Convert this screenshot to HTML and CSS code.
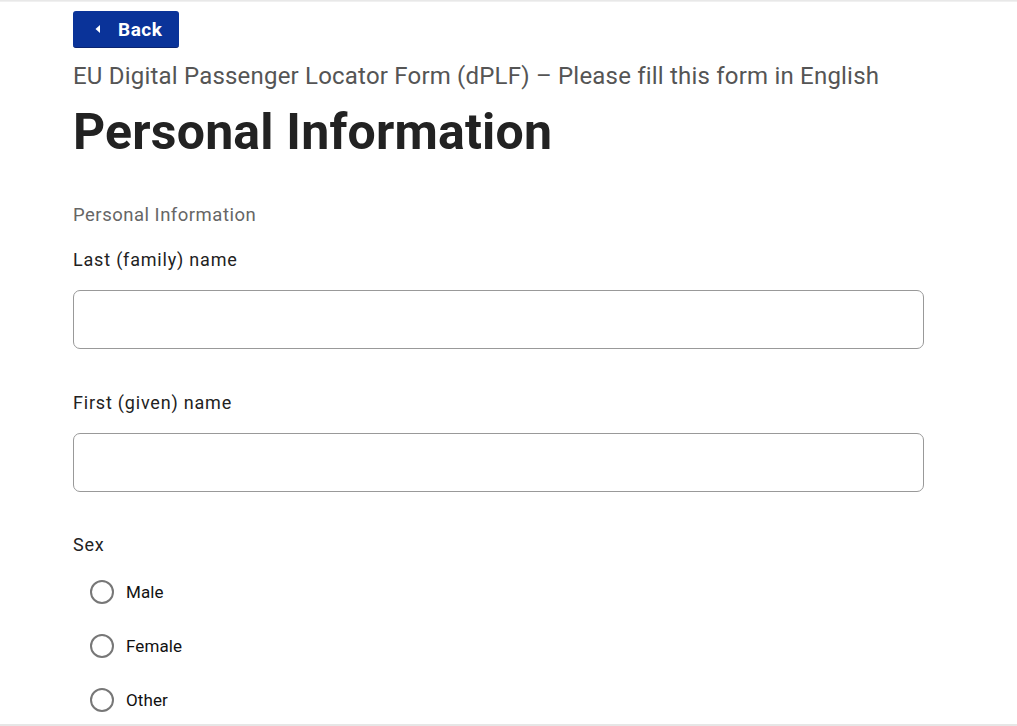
FILE: index.html
```html
<!DOCTYPE html>
<html lang="en">
<head>
<meta charset="utf-8">
<title>Personal Information</title>
<link rel="stylesheet" href="styles.css">
</head>
<body>
<div class="topline"></div>
<main class="page">
  <button class="back" type="button">
    <svg class="back-icon" width="8" height="10" viewBox="0 0 8 10"><path d="M6 1 L1.5 5 L6 9 Z" fill="#fff"/></svg>
    <span>Back</span>
  </button>
  <p class="subtitle">EU Digital Passenger Locator Form (dPLF) – Please fill this form in English</p>
  <h1 class="title">Personal Information</h1>
  <p class="section">Personal Information</p>
  <div class="field">
    <label class="label" for="last">Last (family) name</label>
    <input class="input" id="last" type="text">
  </div>
  <div class="field">
    <label class="label" for="first">First (given) name</label>
    <input class="input" id="first" type="text">
  </div>
  <div class="field field-sex">
    <span class="label">Sex</span>
    <div class="radios">
      <label class="radio"><span class="circle"></span><span>Male</span></label>
      <label class="radio"><span class="circle"></span><span>Female</span></label>
      <label class="radio"><span class="circle"></span><span>Other</span></label>
    </div>
  </div>
</main>
<div class="bottomline"></div>
</body>
</html>
```

FILE: styles.css
```css
html, body {
  margin: 0;
  padding: 0;
  background: #fff;
  font-family: Roboto, "Liberation Sans", sans-serif;
  height: 726px;
  overflow: hidden;
}
body {
  display: flex;
  flex-direction: column;
}
.topline {
  height: 2px;
  background: linear-gradient(#e4e4e4, #f4f4f4);
  flex: none;
}
.bottomline {
  height: 2px;
  background: #e6e6e6;
  flex: none;
  margin-top: auto;
}
.page {
  padding: 9px 0 0 73px;
  width: 851px;
  flex: 1;
  overflow: hidden;
}
.back {
  display: flex;
  align-items: center;
  gap: 16px;
  height: 37px;
  width: 106px;
  padding: 0 0 0 21px;
  background: #0a3399;
  border: none;
  border-bottom: 1px solid #0a2470;
  border-radius: 3px;
  color: #fff;
  font-family: Roboto, "Liberation Sans", sans-serif;
  font-weight: 700;
  font-size: 19px;
  letter-spacing: 0.5px;
  box-sizing: border-box;
}
.back-icon { flex: none; }
.subtitle {
  margin: 14px 0 0;
  font-size: 24px;
  line-height: 28px;
  color: #555;
  font-weight: 400;
  letter-spacing: 0.2px;
}
.title {
  margin: 12px 0 0;
  font-size: 50px;
  line-height: 60px;
  font-weight: 700;
  color: #222;
  letter-spacing: 0.2px;
}
.section {
  margin: 41px 0 0;
  font-size: 18.5px;
  line-height: 24px;
  color: #666;
  letter-spacing: 0.5px;
}
.field {
  margin-top: 21px;
  display: flex;
  flex-direction: column;
}
.field + .field { margin-top: 42px; }
.field + .field-sex { margin-top: 41px; }
.label {
  font-size: 18px;
  line-height: 24px;
  color: #222;
  letter-spacing: 0.8px;
}
.input {
  margin-top: 18px;
  height: 59px;
  width: 851px;
  box-sizing: border-box;
  border: 1px solid #999;
  border-radius: 7px;
  background: #fff;
}
.radios {
  display: flex;
  flex-direction: column;
  gap: 30px;
  margin-top: 23px;
  padding-left: 17px;
}
.radio {
  display: flex;
  align-items: center;
  gap: 12px;
  font-size: 17px;
  line-height: 24px;
  color: #111;
  font-weight: 400;
  letter-spacing: 0.1px;
}
.circle {
  width: 24px;
  height: 24px;
  box-sizing: border-box;
  border: 2px solid #777;
  border-radius: 50%;
  flex: none;
}
```
